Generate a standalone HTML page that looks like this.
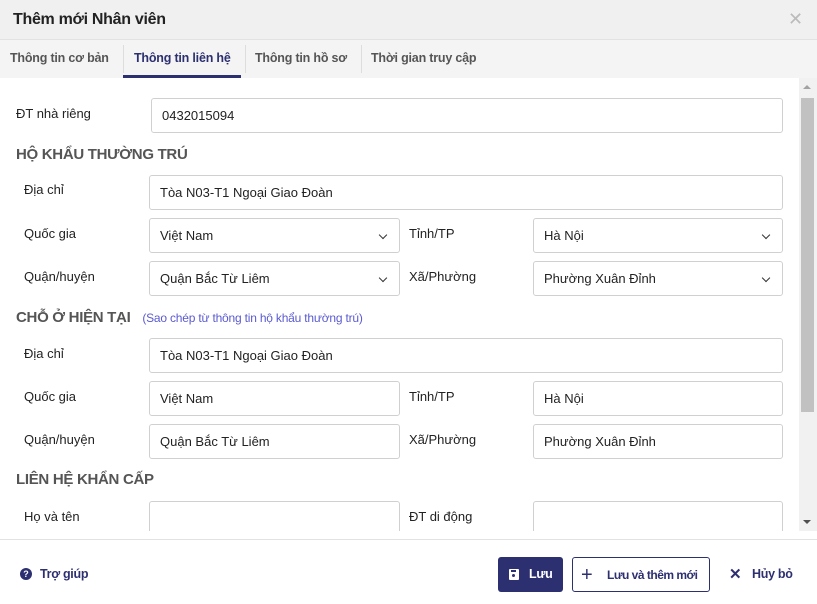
<!DOCTYPE html>
<html><head><meta charset="utf-8"><style>
*{box-sizing:border-box;margin:0;padding:0}
body{width:817px;height:604px;overflow:hidden;background:#fff;font-family:"Liberation Sans",Arial,sans-serif;color:#222;position:relative;font-size:13px}
.a{position:absolute;white-space:nowrap}
.hdr{left:0;top:0;width:817px;height:40px;background:#f0f0f0;border-bottom:1px solid #e2e2e2}
.tabs{left:0;top:40px;width:817px;height:38px;background:#f4f4f4}
.tab{position:absolute;top:11px;font-weight:bold;font-size:12.5px;color:#555;letter-spacing:-0.2px}
.sep{position:absolute;top:5px;width:1px;height:28px;background:#ddd}
.lbl{position:absolute;font-size:13px;color:#222}
.in{position:absolute;height:35px;border:1px solid #d0d0d0;border-radius:3px;background:#fff;font-size:13px;padding:9px 10px;color:#222;white-space:nowrap}
.sel::after{content:"";position:absolute;right:13px;top:13px;width:5px;height:5px;border-right:1.6px solid #333;border-bottom:1.6px solid #333;transform:rotate(45deg)}
.h{position:absolute;left:16px;font-weight:bold;font-size:15px;color:#555;white-space:nowrap;letter-spacing:-0.3px}
.body{left:0;top:78px;width:817px;height:453px;overflow:hidden}
</style></head><body>
<div class="a hdr"><div class="a" style="left:13px;top:11px;font-size:16px;font-weight:bold;color:#222;letter-spacing:-0.3px">Thêm mới Nhân viên</div>
<div class="a" style="left:788px;top:9px;font-size:18px;color:#bbb">✕</div></div>
<div class="a tabs">
<div class="tab" style="left:10px">Thông tin cơ bản</div>
<div class="sep" style="left:123px"></div>
<div class="tab" style="left:134px;color:#2d3070">Thông tin liên hệ</div>
<div class="a" style="left:123px;top:35px;width:118px;height:3px;background:#2d3070"></div>
<div class="sep" style="left:245px"></div>
<div class="tab" style="left:255px">Thông tin hồ sơ</div>
<div class="sep" style="left:361px"></div>
<div class="tab" style="left:371px">Thời gian truy cập</div>
</div>
<div class="a body">
<div class="lbl" style="left:16px;top:28px">ĐT nhà riêng</div>
<div class="in" style="left:151px;top:20px;width:632px">0432015094</div>
<div class="h" style="top:68px">HỘ KHẨU THƯỜNG TRÚ</div>
<div class="lbl" style="left:24px;top:104px">Địa chỉ</div>
<div class="in" style="left:149px;top:97px;width:634px">Tòa N03-T1 Ngoại Giao Đoàn</div>
<div class="lbl" style="left:24px;top:148px">Quốc gia</div>
<div class="in sel" style="left:149px;top:140px;width:251px">Việt Nam</div>
<div class="lbl" style="left:409px;top:148px">Tỉnh/TP</div>
<div class="in sel" style="left:533px;top:140px;width:250px">Hà Nội</div>
<div class="lbl" style="left:24px;top:191px">Quận/huyện</div>
<div class="in sel" style="left:149px;top:183px;width:251px">Quận Bắc Từ Liêm</div>
<div class="lbl" style="left:409px;top:191px">Xã/Phường</div>
<div class="in sel" style="left:533px;top:183px;width:250px">Phường Xuân Đỉnh</div>
<div class="h" style="top:231px">CHỖ Ở HIỆN TẠI <span style="font-size:12px;color:#5a5ad0;font-weight:normal;margin-left:8px;letter-spacing:-0.2px">(Sao chép từ thông tin hộ khẩu thường trú)</span></div>
<div class="lbl" style="left:24px;top:268px">Địa chỉ</div>
<div class="in" style="left:149px;top:260px;width:634px">Tòa N03-T1 Ngoại Giao Đoàn</div>
<div class="lbl" style="left:24px;top:311px">Quốc gia</div>
<div class="in" style="left:149px;top:303px;width:251px">Việt Nam</div>
<div class="lbl" style="left:409px;top:311px">Tỉnh/TP</div>
<div class="in" style="left:533px;top:303px;width:250px">Hà Nội</div>
<div class="lbl" style="left:24px;top:354px">Quận/huyện</div>
<div class="in" style="left:149px;top:346px;width:251px">Quận Bắc Từ Liêm</div>
<div class="lbl" style="left:409px;top:354px">Xã/Phường</div>
<div class="in" style="left:533px;top:346px;width:250px">Phường Xuân Đỉnh</div>
<div class="h" style="top:393px">LIÊN HỆ KHẨN CẤP</div>
<div class="lbl" style="left:24px;top:431px">Họ và tên</div>
<div class="in" style="left:149px;top:423px;width:251px"></div>
<div class="lbl" style="left:409px;top:431px">ĐT di động</div>
<div class="in" style="left:533px;top:423px;width:250px"></div>
<div class="a" style="left:799px;top:0;width:18px;height:453px;background:#f1f1f1"></div>
<div class="a" style="left:801px;top:20px;width:13px;height:314px;background:#c1c1c1"></div>
<div class="a" style="left:803px;top:7px;border:4px solid transparent;border-bottom:4px solid #a3a3a3;border-top:0"></div>
<div class="a" style="left:803px;top:442px;border:4px solid transparent;border-top:4px solid #505050;border-bottom:0"></div>
</div>
<div class="a" style="left:0;top:539px;width:817px;height:1px;background:#e2e2e2"></div>
<div class="a" style="left:20px;top:568px;width:12px;height:12px;border-radius:50%;background:#2d3070;color:#fff;font-size:9px;font-weight:bold;text-align:center;line-height:12px">?</div>
<div class="a" style="left:40px;top:567px;font-weight:bold;font-size:12.5px;color:#2d3070;letter-spacing:-0.3px">Trợ giúp</div>
<div class="a" style="left:498px;top:557px;width:65px;height:35px;background:#2d3070;border-radius:3px;color:#fff;font-weight:bold;font-size:12.5px;padding:10px 0 0 31px;letter-spacing:-0.3px">Lưu
<div class="a" style="left:11px;top:12px;width:10px;height:11px;background:#fff;border-radius:1px"><div class="a" style="left:3px;top:5px;width:3px;height:3px;background:#2d3070;border-radius:50%"></div><div class="a" style="left:2px;top:1px;width:5px;height:2px;background:#2d3070"></div></div></div>
<div class="a" style="left:572px;top:557px;width:138px;height:35px;border:1px solid #2d3070;border-radius:3px;color:#2d3070;font-weight:bold;font-size:12px;padding:10px 0 0 34px;letter-spacing:-0.5px">Lưu và thêm mới
<div class="a" style="left:8px;top:6px;font-size:20px;font-weight:normal">+</div></div>
<div class="a" style="left:729px;top:565px;font-size:15px;color:#2d3070;font-weight:bold">✕</div>
<div class="a" style="left:752px;top:567px;font-weight:bold;font-size:12.5px;color:#2d3070;letter-spacing:-0.3px">Hủy bỏ</div>
</body></html>
